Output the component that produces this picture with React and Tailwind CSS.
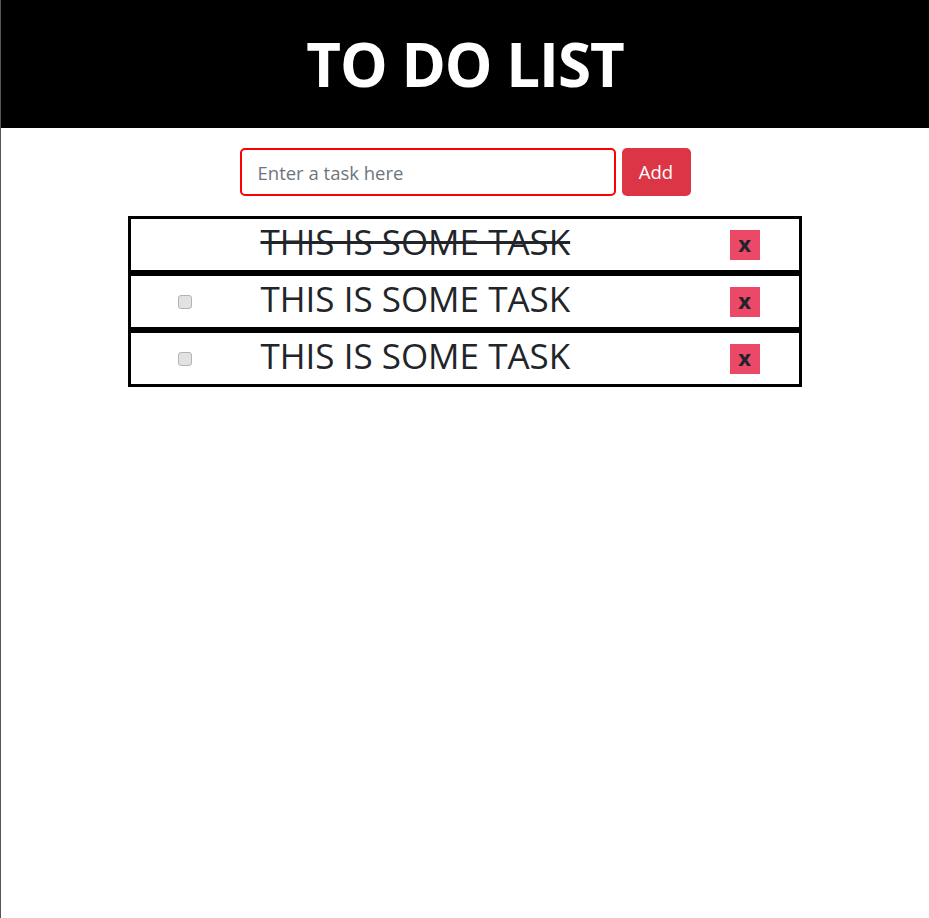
import { useState } from 'react';

const INITIAL_TASKS = [
  { id: 1, text: 'THIS IS SOME TASK', done: true },
  { id: 2, text: 'THIS IS SOME TASK', done: false },
  { id: 3, text: 'THIS IS SOME TASK', done: false },
];

export default function App() {
  const [tasks, setTasks] = useState(INITIAL_TASKS);
  const [draft, setDraft] = useState('');

  const addTask = () => {
    if (!draft.trim()) return;
    setTasks([...tasks, { id: Date.now(), text: draft.toUpperCase(), done: false }]);
    setDraft('');
  };

  const toggle = (id) => setTasks(tasks.map((t) => (t.id === id ? { ...t, done: !t.done } : t)));
  const remove = (id) => setTasks(tasks.filter((t) => t.id !== id));

  return (
    <div className="min-h-[918px] bg-white border-l border-[#555] font-['Open_Sans',sans-serif] text-[#212529]">
      {/* ── Header ── */}
      <header className="h-[128px] bg-black flex items-center justify-center">
        <h1 className="text-white font-bold text-[60px] tracking-[-1px] leading-none">TO DO LIST</h1>
      </header>

      {/* ── Input row ── */}
      <div className="flex justify-center gap-[6px] mt-[20px]">
        <input
          type="text"
          value={draft}
          onChange={(e) => setDraft(e.target.value)}
          placeholder="Enter a task here"
          className="w-[376px] h-[48px] px-[16px] text-[18.5px] rounded-[5px] border-2 border-[#ff0000] outline-none placeholder:text-[#6c757d]"
        />
        <button
          type="button"
          onClick={addTask}
          className="w-[69px] h-[48px] rounded-[5px] bg-[#dc3545] text-white text-[18.5px]"
        >
          Add
        </button>
      </div>

      {/* ── Task list ── */}
      <div className="w-[675px] mx-auto mt-[20px] pr-[1px]">
        {tasks.map((t) => (
          <div key={t.id} className="h-[57px] border-[3px] border-black flex items-center">
            <div className="w-[108px] flex justify-center pl-[1px]">
              {!t.done && (
                <input
                  type="checkbox"
                  checked={t.done}
                  onChange={() => toggle(t.id)}
                  className="appearance-none w-[14px] h-[14px] mt-[1px] rounded-[3px] border border-[#b4b4b4] bg-[#e2e2e2]"
                />
              )}
            </div>
            <div className={`flex-1 pl-[22px] text-[35px] leading-none -mt-[6px] ${t.done ? 'line-through' : ''}`}>
              {t.text}
            </div>
            <div className="w-[110px] flex justify-center pl-[2px]">
              <button
                type="button"
                onClick={() => remove(t.id)}
                className="w-[30px] h-[30px] bg-[#ec4867] text-[#212529] font-bold text-[22px] leading-none flex items-center justify-center pb-[3px]"
              >
                x
              </button>
            </div>
          </div>
        ))}
      </div>
    </div>
  );
}
